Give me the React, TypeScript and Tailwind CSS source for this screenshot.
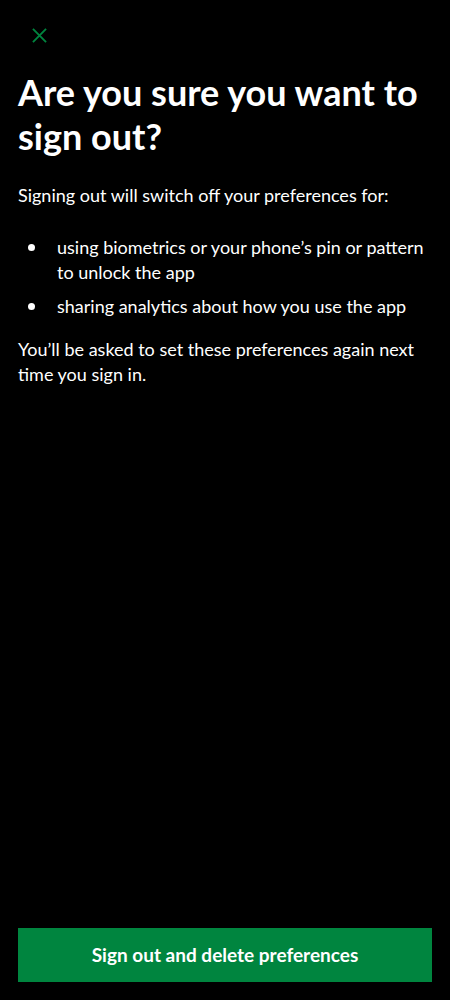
export default function App() {
  return (
    <div className="flex h-[1000px] w-[450px] flex-col bg-black px-[18px] text-white [font-family:Lato,sans-serif]">
      <button className="mt-[27px] flex h-[16px] w-[44px] items-center pl-[14px] text-[#00853f]" aria-label="Close">
        <svg width="15" height="15" viewBox="0 0 16 16" fill="none" stroke="currentColor" strokeWidth="2">
          <path d="M1 1 L15 15 M15 1 L1 15" />
        </svg>
      </button>

      <h1 className="mt-[27px] text-[36px] font-bold leading-[44px]">
        Are you sure you want to sign out?
      </h1>

      <p className="mt-[25px] text-[18px] leading-[25px]">
        Signing out will switch off your preferences for:
      </p>

      <ul className="mt-[27px] flex flex-col gap-[9px] text-[18px] leading-[25px]">
        <li className="flex">
          <span className="flex h-[25px] w-[39px] shrink-0 items-center pl-[10px]">
            <span className="h-[7px] w-[7px] rounded-full bg-white" />
          </span>
          <span>using biometrics or your phone’s pin or pattern to unlock the app</span>
        </li>
        <li className="flex">
          <span className="flex h-[25px] w-[39px] shrink-0 items-center pl-[10px]">
            <span className="h-[7px] w-[7px] rounded-full bg-white" />
          </span>
          <span>sharing analytics about how you use the app</span>
        </li>
      </ul>

      <p className="mt-[18px] text-[18px] leading-[25px]">
        You’ll be asked to set these preferences again next time you sign in.
      </p>

      <div className="mt-auto pb-[18px]">
        <button className="h-[54px] w-full bg-[#00853f] text-[19px] font-bold text-white">
          Sign out and delete preferences
        </button>
      </div>
    </div>
  );
}
